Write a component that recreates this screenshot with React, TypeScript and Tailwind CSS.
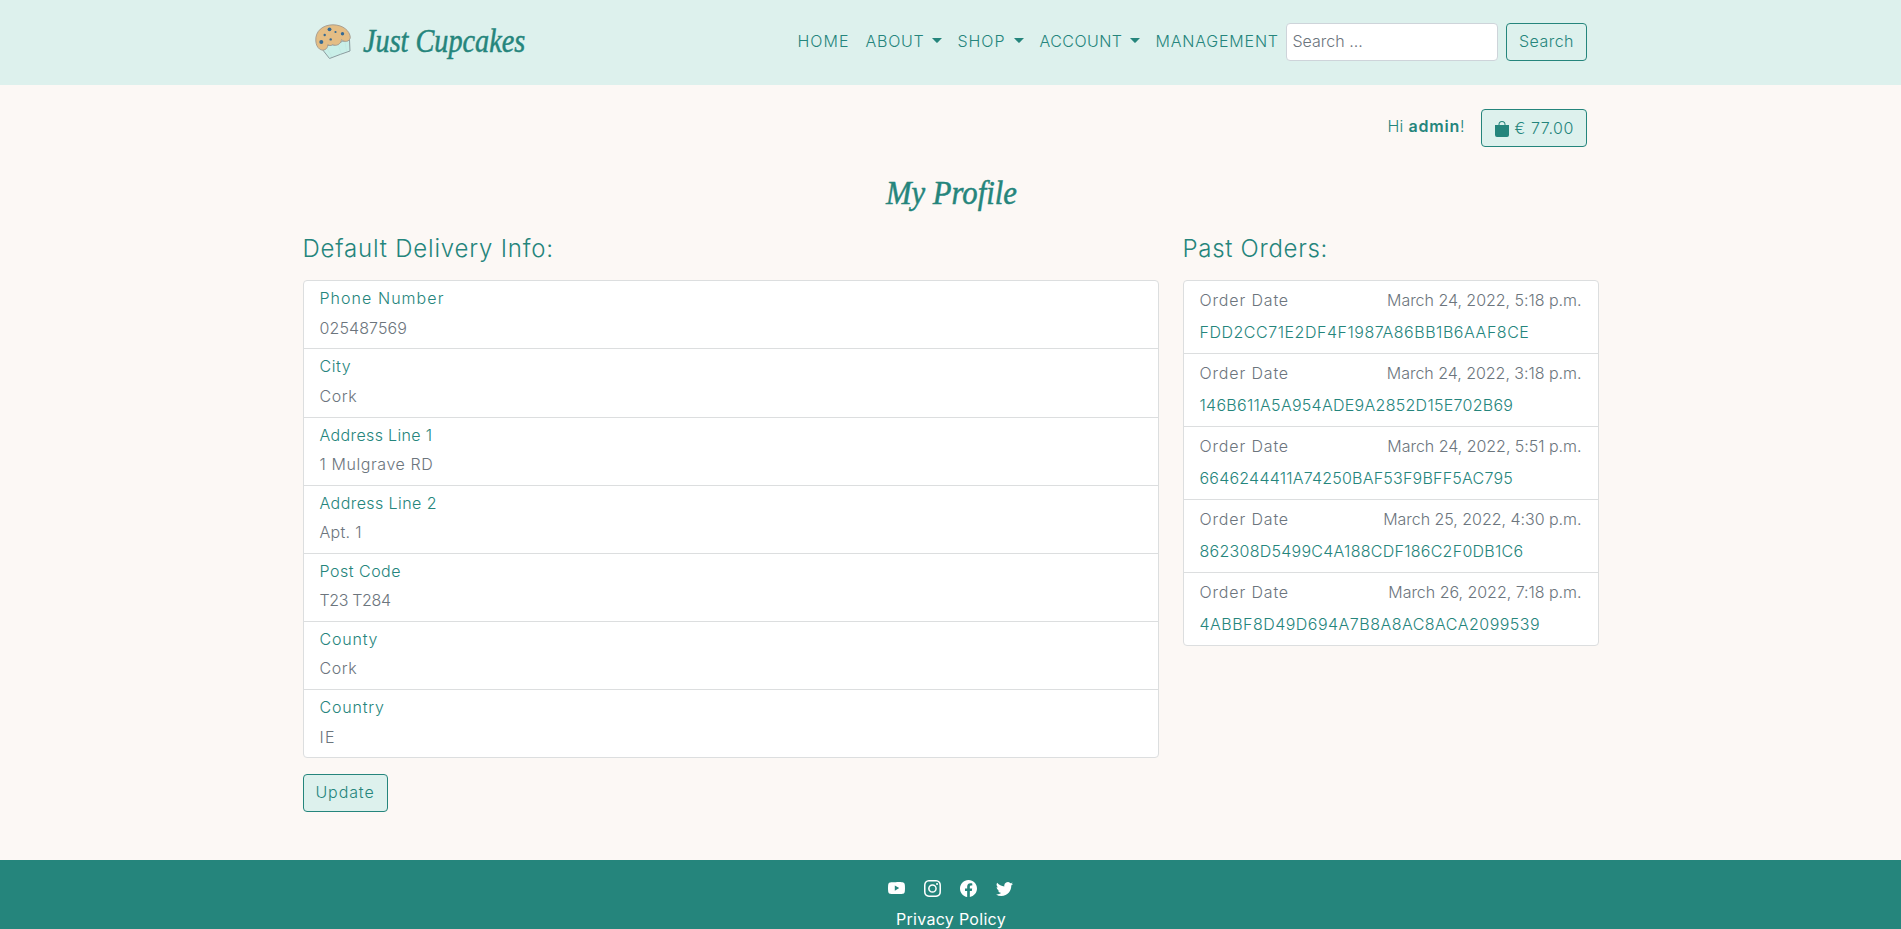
import {
  BsBagFill,
  BsFacebook,
  BsInstagram,
  BsTwitter,
  BsYoutube,
} from "react-icons/bs";

const navItems = [
  { label: "HOME", width: "w-[52px]", tracking: "tracking-[1px]", menu: false },
  { label: "ABOUT", width: "w-[76px]", tracking: "tracking-[0.75px]", menu: true },
  { label: "SHOP", width: "w-[66px]", tracking: "tracking-[0.95px]", menu: true },
  { label: "ACCOUNT", width: "w-[100px]", tracking: "tracking-[0.45px]", menu: true },
  { label: "MANAGEMENT", width: "w-[122px]", tracking: "tracking-[0.8px]", menu: false },
];

const deliveryInfo = [
  { label: "Phone Number", value: "025487569", lt: "tracking-[1.05px]", vt: "tracking-[0.1px]" },
  { label: "City", value: "Cork", lt: "tracking-[0.6px]", vt: "tracking-[0.6px]" },
  { label: "Address Line 1", value: "1 Mulgrave RD", lt: "tracking-[0.36px]", vt: "tracking-[0.58px]" },
  { label: "Address Line 2", value: "Apt. 1", lt: "tracking-[0.42px]", vt: "tracking-[0.3px]" },
  { label: "Post Code", value: "T23 T284", lt: "tracking-[0.5px]", vt: "tracking-[-0.35px]" },
  { label: "County", value: "Cork", lt: "tracking-[0.8px]", vt: "tracking-[0.6px]" },
  { label: "Country", value: "IE", lt: "tracking-[0.8px]", vt: "tracking-[1.2px]" },
];

const orders = [
  { date: "March 24, 2022, 5:18 p.m.", id: "FDD2CC71E2DF4F1987A86BB1B6AAF8CE", tracking: "tracking-[0.53px]" },
  { date: "March 24, 2022, 3:18 p.m.", id: "146B611A5A954ADE9A2852D15E702B69", tracking: "tracking-[0.28px]" },
  { date: "March 24, 2022, 5:51 p.m.", id: "6646244411A74250BAF53F9BFF5AC795", tracking: "tracking-[0.22px]" },
  { date: "March 25, 2022, 4:30 p.m.", id: "862308D5499C4A188CDF186C2F0DB1C6", tracking: "tracking-[0.27px]" },
  { date: "March 26, 2022, 7:18 p.m.", id: "4ABBF8D49D694A7B8A8AC8ACA2099539", tracking: "tracking-[0.48px]" },
];

function Caret() {
  return (
    <svg className="mb-px ml-auto h-[5px] w-[10px]" viewBox="0 0 10 5" fill="currentColor">
      <path d="M0 0h10L5.4 4.8h-.8z" />
    </svg>
  );
}

function Cupcake() {
  return (
    <svg className="h-[36px] w-[36px]" viewBox="0 0 36 36">
      <path d="M7 25 Q12 20 20 21 Q28 16 34.500 16 L35 27 Q26 30 14.500 34.500 Z" fill="#c9efe8" stroke="#8b9c9f" strokeWidth="1" strokeLinejoin="round" />
      <path d="M12 24l5 9M23 20l3 9M30 18l1.500 9" stroke="#bfe5df" strokeWidth=".6" />
      <path d="M.8 17C0 7 8 .8 18 .8C28 .8 35 7 35.300 13.500C34.800 18 29 18.500 26.500 15.500C26 20.500 21 22.500 17.500 20.500C16 22.300 14 21.500 12.800 20.500C13 25.500 8 27.500 4.500 25C2 23 1 20 .8 17Z" fill="#e4bd84" stroke="#a39a8e" strokeWidth=".9" />
      <g fill="#356a94">
        <circle cx="14.500" cy="5.300" r="1.900" />
        <circle cx="27.500" cy="9.700" r="1.700" />
        <circle cx="6.300" cy="18" r="2" />
        <circle cx="20.500" cy="8" r="1.100" />
        <circle cx="9.700" cy="11" r="1.200" />
        <circle cx="15.700" cy="15.400" r="1.200" />
      </g>
    </svg>
  );
}

export default function App() {
  return (
    <div className="flex h-[929px] flex-col overflow-hidden bg-[#fcf8f5] font-['Inter',sans-serif] text-base leading-6 font-light text-[#25857c]">
      <header className="h-[85px] shrink-0 bg-[#ddf1ed]">
        <div className="mx-auto flex h-[84px] w-[1272px] items-center">
          <a className="flex items-center">
            <Cupcake />
            <span className="mb-[2px] ml-[12px] block w-[180px] origin-left scale-x-[0.855] whitespace-nowrap font-['Liberation_Serif',serif] text-[33px] leading-[40px] font-normal italic [-webkit-text-stroke:0.5px_#25857c]">
              Just Cupcakes
            </span>
          </a>
          <nav className="mr-[8px] ml-auto flex gap-4 pb-[2px]">
            {navItems.map((item) => (
              <a key={item.label} className={`flex items-center whitespace-nowrap ${item.width}`}>
                <span className={item.tracking}>{item.label}</span>
                {item.menu && <Caret />}
              </a>
            ))}
          </nav>
          <input
            className="h-[38px] w-[212px] rounded border border-[#ced4da] bg-white px-[6px] pb-[2px] placeholder:text-[#6c757d] placeholder:opacity-100"
            placeholder="Search ..."
          />
          <button className="ml-2 h-[38px] w-[81px] rounded border border-[#25857c] pb-[2px] pl-px text-center tracking-[0.45px]">
            Search
          </button>
        </div>
      </header>

      <div className="mx-auto mt-[24px] flex h-[38px] w-[1272px] items-center justify-end">
        <p className="mr-[16px] -mt-[4px]">
          <span className="tracking-[0.3px]">Hi </span>
          <strong className="font-semibold tracking-[0.8px]">admin</strong>!
        </p>
        <button className="flex h-[38px] w-[106px] items-center rounded border border-[#25857c] bg-[#ddf1ed] pl-[12px]">
          <BsBagFill className="mt-[2px] h-4 w-4" />
          <span className="-mt-px ml-[5px] tracking-[0.6px]">€ 77.00</span>
        </button>
      </div>

      <h1 className="mt-[24px] h-[44px] origin-center scale-x-[0.93] pl-[2px] text-center font-['Liberation_Serif',serif] text-[33px] leading-[44px] font-normal italic [-webkit-text-stroke:0.5px_#25857c]">
        My Profile
      </h1>

      <main className="mx-auto mt-[19px] flex w-[1296px] gap-6">
        <section className="w-[856px]">
          <h2 className="text-2xl leading-[29px] tracking-[0.8px]">Default Delivery Info:</h2>
          <div className="mt-[17.3px] rounded border border-[#dcdedf] bg-white">
            {deliveryInfo.map((field) => (
              <div key={field.label} className="h-[68.17px] border-b border-[#dcdedf] px-4 pt-[5px] last:h-[67.17px] last:border-b-0">
                <p className={field.lt}>{field.label}</p>
                <p className={`mt-[5.3px] text-[#6c757d] ${field.vt}`}>{field.value}</p>
              </div>
            ))}
          </div>
          <button className="mt-4 h-[38px] w-[85px] rounded border border-[#25857c] bg-[#ddf1ed] pb-[2px] text-center tracking-[0.9px]">
            Update
          </button>
        </section>
        <section className="w-[416px]">
          <h2 className="text-2xl leading-[29px] tracking-[0.7px]">Past Orders:</h2>
          <div className="mt-[17.3px] rounded border border-[#dcdedf] bg-white">
            {orders.map((order) => (
              <div key={order.id} className="h-[73px] border-b border-[#dcdedf] px-4 pt-[7px] last:h-[72px] last:border-b-0">
                <div className="flex justify-between text-[#6c757d]">
                  <span className="tracking-[0.85px]">Order Date</span>
                  <span className="tracking-[-0.03px]">{order.date}</span>
                </div>
                <a className={`mt-2 block whitespace-nowrap ${order.tracking}`}>{order.id}</a>
              </div>
            ))}
          </div>
        </section>
      </main>

      <footer className="mt-[47.7px] flex h-[120px] shrink-0 flex-col items-center bg-[#25857c] pt-[20px] text-white">
        <div className="flex gap-[19px] text-[17px]">
          <BsYoutube />
          <BsInstagram />
          <BsFacebook />
          <BsTwitter />
        </div>
        <a className="mt-[10px] pl-px font-normal tracking-[0.3px]">Privacy Policy</a>
      </footer>
    </div>
  );
}
